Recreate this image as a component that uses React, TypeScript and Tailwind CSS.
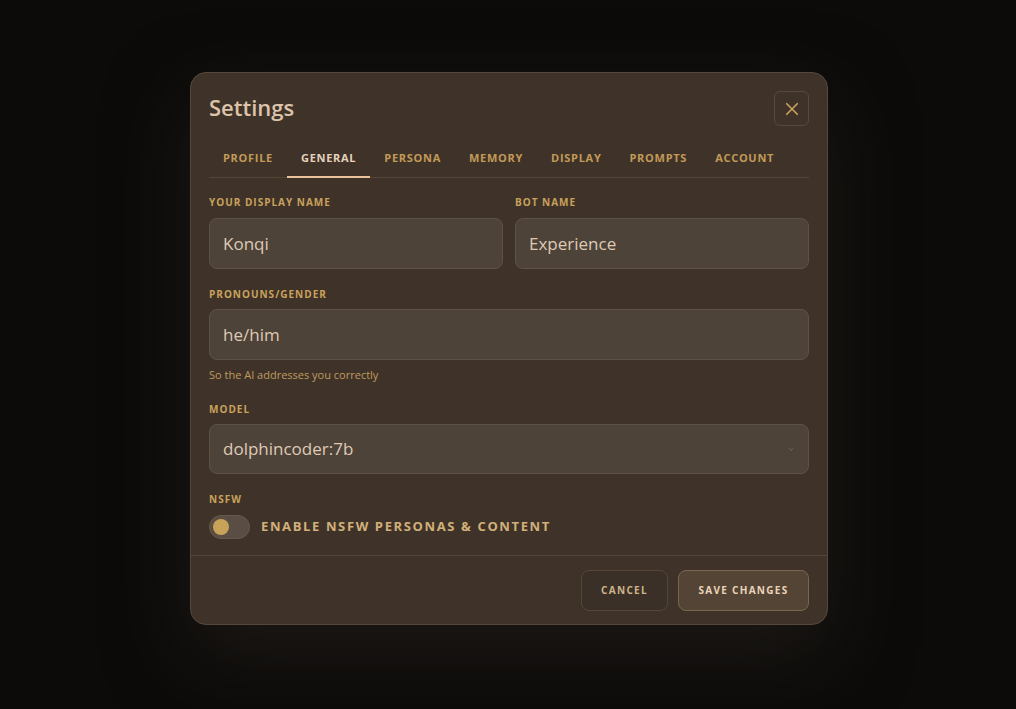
import React from "react";

const font = { fontFamily: '"Open Sans", "Noto Sans", sans-serif' };

function Label({ children, className = "" }: { children: React.ReactNode; className?: string }) {
  return (
    <div className={`text-[10px] leading-[14px] font-bold tracking-[0.1em] uppercase text-[#c9a15c] ${className}`}>
      {children}
    </div>
  );
}

function Field({ value }: { value: string }) {
  return (
    <div className="h-[51px] rounded-[8px] border border-[#5e5246] bg-[#4e4339] flex items-center px-[13px] text-[17px] text-[#dfcab5]">
      {value}
    </div>
  );
}

export default function App() {
  const tabs = ["Profile", "General", "Persona", "Memory", "Display", "Prompts", "Account"];
  return (
    <div style={font} className="w-[1016px] h-[709px] bg-[#0c0b0a] flex items-start justify-center pt-[72px] pl-[2px] overflow-hidden">
      <div className="w-[638px] rounded-[16px] border border-[#55483b] bg-[#3f3329] shadow-[0_30px_80px_rgba(40,34,28,0.6)]">
        {/* Header */}
        <div className="flex items-center justify-between px-[18px] pt-[18px]">
          <div className="text-[22px] font-semibold text-[#dcc3aa] leading-[34px] -mt-[3px]">Settings</div>
          <button className="w-[35px] h-[35px] rounded-[6px] border border-[#57493c] flex items-center justify-center text-[#c9a15e]">
            <svg width="18" height="18" viewBox="0 0 24 24" fill="none" stroke="currentColor" strokeWidth="2.2" strokeLinecap="round">
              <path d="M5 5 L19 19 M19 5 L5 19" />
            </svg>
          </button>
        </div>
        {/* Tabs */}
        <div className="mx-[18px] mt-[16px] flex border-b border-[#534639]">
          {tabs.map((t) => {
            const active = t === "General";
            return (
              <div
                key={t}
                className={`px-[14px] h-[36px] flex items-center text-[11px] font-bold tracking-[0.065em] uppercase border-b-2 -mb-[1px] pb-[1px] ${
                  active ? "text-[#e6d2bc] border-[#e8c39a]" : "text-[#c29a58] border-transparent"
                }`}
              >
                {t}
              </div>
            );
          })}
        </div>
        {/* Body */}
        <div className="px-[18px] pt-[17px]">
          <div className="grid grid-cols-2 gap-x-[12px]">
            <div>
              <Label className="mb-[9px]">Your Display Name</Label>
              <Field value="Konqi" />
            </div>
            <div>
              <Label className="mb-[9px]">Bot Name</Label>
              <Field value="Experience" />
            </div>
          </div>
          <Label className="mt-[18px] mb-[8px]">Pronouns/Gender</Label>
          <div className="h-[51px] rounded-[8px] border border-[#5e5246] bg-[#4e4339] flex items-center px-[13px] text-[17px] text-[#dfcab5]">
            he/him
          </div>
          <div className="mt-[7px] text-[11px] leading-[16px] text-[#bf9a5e]">So the AI addresses you correctly</div>
          <Label className="mt-[19px] mb-[8px]">Model</Label>
          <div className="h-[50px] rounded-[8px] border border-[#5e5246] bg-[#4e4339] flex items-center justify-between px-[13px] text-[17px] text-[#dfcab5]">
            <span>dolphincoder:7b</span>
            <svg width="10" height="10" viewBox="0 0 24 24" fill="none" stroke="#6a5c4e" strokeWidth="2.5" className="mr-[-1px]">
              <path d="M6 9l6 6 6-6" />
            </svg>
          </div>
          <Label className="mt-[18px] mb-[9px]">NSFW</Label>
          <div className="flex items-center gap-[11px]">
            <div className="w-[41px] h-[24px] rounded-full bg-[#5a4e44] border border-[#665849] flex items-center pl-[3px]">
              <div className="w-[16px] h-[16px] rounded-full bg-[#c9a25a]" />
            </div>
            <div className="text-[13px] font-bold tracking-[0.125em] uppercase text-[#d2b07a]">Enable NSFW Personas &amp; Content</div>
          </div>
        </div>
        {/* Footer */}
        <div className="mt-[16px] border-t border-[#51443a] px-[18px] pt-[14px] pb-[13px] flex justify-end gap-[10px]">
          <button className="h-[41px] w-[87px] rounded-[8px] border border-[#54463a] bg-[#3b3027] text-[10px] font-bold tracking-[0.13em] uppercase text-[#d0b48a]">
            Cancel
          </button>
          <button className="h-[41px] w-[131px] rounded-[8px] border border-[#7a6650] bg-[#544435] text-[10px] font-bold tracking-[0.13em] uppercase text-[#ead4ba]">
            Save Changes
          </button>
        </div>
      </div>
    </div>
  );
}
